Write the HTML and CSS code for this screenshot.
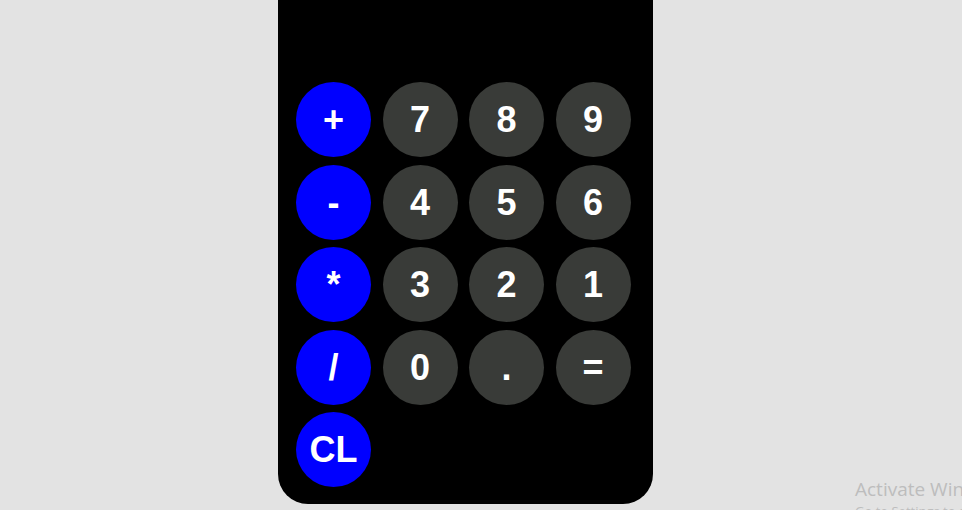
FILE: index.html
```html
<!DOCTYPE html>
<html>
<head>
<meta charset="utf-8">
<link rel="stylesheet" href="styles.css">
</head>
<body>
<div class="calc">
  <div class="keys">
    <button class="key op">+</button>
    <button class="key">7</button>
    <button class="key">8</button>
    <button class="key">9</button>
    <button class="key op">-</button>
    <button class="key">4</button>
    <button class="key">5</button>
    <button class="key">6</button>
    <button class="key op">*</button>
    <button class="key">3</button>
    <button class="key">2</button>
    <button class="key">1</button>
    <button class="key op">/</button>
    <button class="key">0</button>
    <button class="key">.</button>
    <button class="key">=</button>
    <button class="key op">CL</button>
  </div>
</div>
<div class="watermark">
  <div class="wm-title">Activate Windows</div>
  <div class="wm-sub">Go to Settings to activate Windows.</div>
</div>
</body>
</html>
```
FILE: styles.css
```css
html, body {
  margin: 0;
  padding: 0;
  height: 100%;
  overflow: hidden;
}
body {
  background: #e3e3e3;
  position: relative;
}
.calc {
  width: 375px;
  height: 504px;
  margin-left: 278px;
  background: #000;
  border-radius: 0 0 30px 30px;
  box-sizing: border-box;
  padding: 82px 0 0 18px;
}
.keys {
  display: grid;
  grid-template-columns: repeat(4, 75px);
  column-gap: 11.5px;
  row-gap: 7.5px;
}
.key {
  width: 75px;
  height: 75px;
  border: none;
  border-radius: 50%;
  padding: 0;
  margin: 0;
  background: #393b38;
  color: #fff;
  font-family: "Liberation Sans", Arial, sans-serif;
  font-weight: bold;
  font-size: 36px;
  line-height: 75px;
  text-align: center;
}
.key.op {
  background: #0000ff;
}
.watermark {
  position: absolute;
  left: 855px;
  top: 476px;
  color: #bdbdbd;
  font-family: "Open Sans", "Noto Sans", sans-serif;
  white-space: nowrap;
}
.wm-title {
  font-size: 19px;
  line-height: 26px;
}
.wm-sub {
  font-size: 13px;
  line-height: 18px;
}
```
